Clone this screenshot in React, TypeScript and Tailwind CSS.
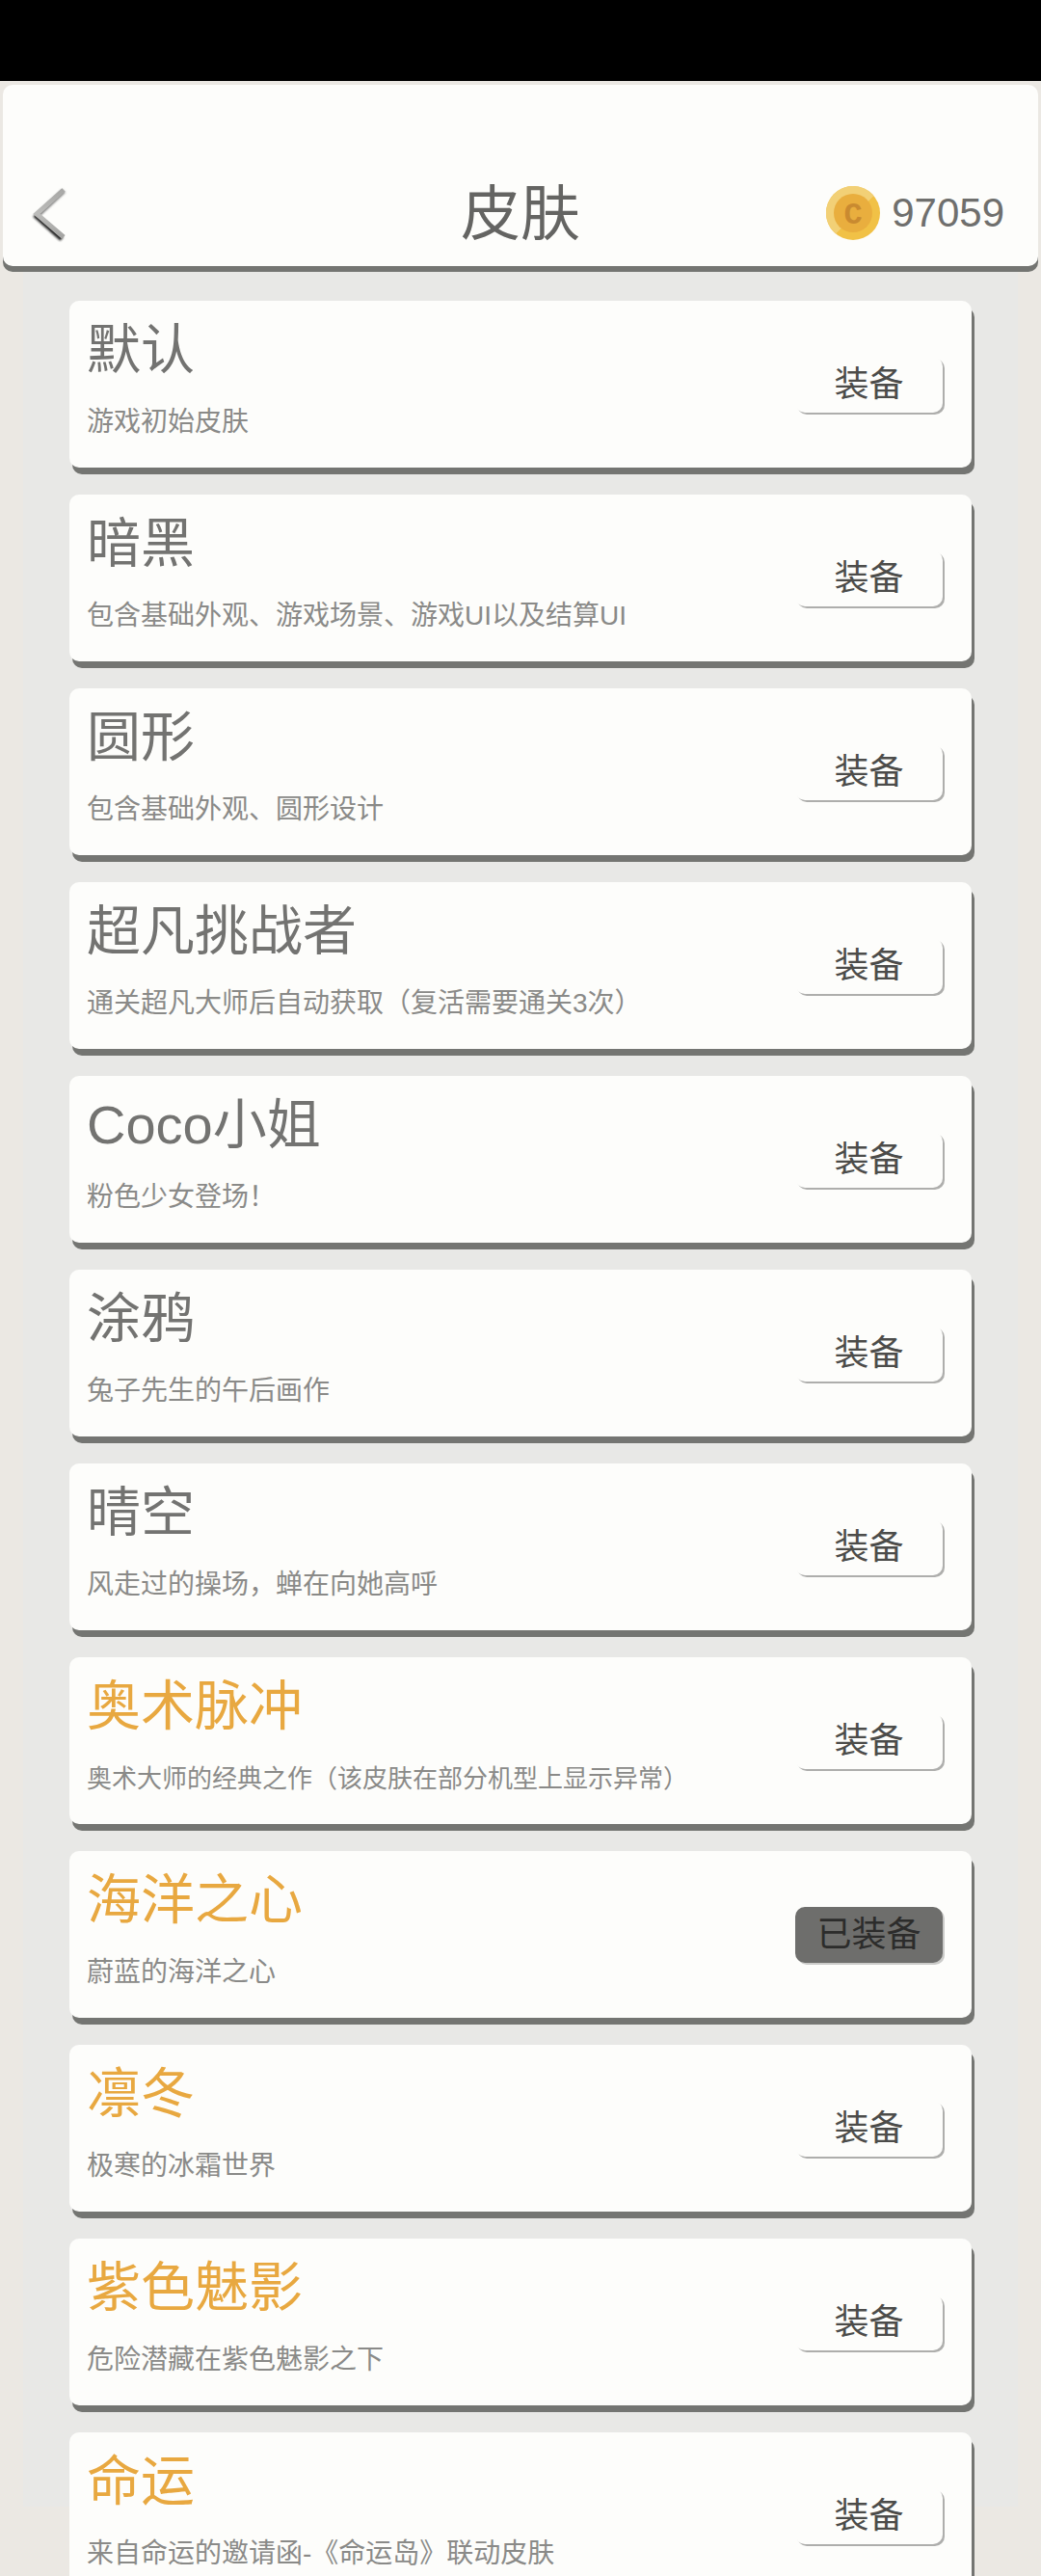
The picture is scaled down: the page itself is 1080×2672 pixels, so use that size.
import { useState } from 'react';

interface Skin {
  id: string;
  name: string;
  desc: string;
  rare?: boolean;
}

const SKINS: Skin[] = [
  { id: 'default', name: '默认', desc: '游戏初始皮肤' },
  { id: 'dark', name: '暗黑', desc: '包含基础外观、游戏场景、游戏UI以及结算UI' },
  { id: 'round', name: '圆形', desc: '包含基础外观、圆形设计' },
  { id: 'challenger', name: '超凡挑战者', desc: '通关超凡大师后自动获取（复活需要通关3次）' },
  { id: 'coco', name: 'Coco小姐', desc: '粉色少女登场！' },
  { id: 'doodle', name: '涂鸦', desc: '兔子先生的午后画作' },
  { id: 'clear-sky', name: '晴空', desc: '风走过的操场，蝉在向她高呼' },
  { id: 'arcane', name: '奥术脉冲', desc: '奥术大师的经典之作（该皮肤在部分机型上显示异常）', rare: true },
  { id: 'ocean', name: '海洋之心', desc: '蔚蓝的海洋之心', rare: true },
  { id: 'winter', name: '凛冬', desc: '极寒的冰霜世界', rare: true },
  { id: 'purple', name: '紫色魅影', desc: '危险潜藏在紫色魅影之下', rare: true },
  { id: 'destiny', name: '命运', desc: '来自命运的邀请函-《命运岛》联动皮肤', rare: true },
];

// Descriptions longer than this drop one text size so they clear the button
const LONG_DESC = 22;

// ── Icons ─────────────────────────────────────────────────────────────────────
const BackIcon = () => (
  <svg viewBox="0 0 40 60" className="h-[60px] w-10" fill="none" aria-hidden="true">
    <defs>
      <filter id="soft" x="-20%" y="-20%" width="140%" height="140%">
        <feGaussianBlur stdDeviation="1" />
      </filter>
      <linearGradient id="metal" x1="0" y1="0" x2="0" y2="1">
        <stop offset="0" stopColor="#a8a8a6" />
        <stop offset="0.5" stopColor="#bcbcba" />
        <stop offset="1" stopColor="#a4a4a2" />
      </linearGradient>
    </defs>
    <path d="M36 4L9 29" stroke="#777" strokeWidth="5" filter="url(#soft)" />
    <path d="M6 29L34 54" stroke="#222" strokeWidth="5" filter="url(#soft)" />
    <path d="M36 3L8 28L36 52" stroke="url(#metal)" strokeWidth="5" />
  </svg>
);

const CoinIcon = () => (
  <svg viewBox="0 0 56 56" className="size-14" aria-hidden="true">
    <circle cx="28" cy="28" r="28" fill="#f1c146" />
    <path d="M10 49.500A28 28 0 0 1 28 0A28 28 0 0 1 49.500 10Z" fill="#f2d076" />
    <circle cx="28" cy="28" r="20" fill="#e9ae3e" />
    <text
      x="28"
      y="39"
      textAnchor="middle"
      className="fill-[#c98a30] font-['Liberation_Mono',monospace] text-[32px] font-bold"
    >
      C
    </text>
  </svg>
);

// ── Skin card ─────────────────────────────────────────────────────────────────
interface SkinCardProps {
  skin: Skin;
  equipped: boolean;
  onEquip: () => void;
}

const SkinCard = ({ skin, equipped, onEquip }: SkinCardProps) => (
  <li className="flex h-[173px] shrink-0 items-center justify-between rounded-[10px] bg-[#fdfdfb] pl-[18px] pr-[30px] shadow-[3px_7px_0_#747572]">
    <div className="flex flex-col gap-5 self-start pt-4">
      <h2 className={`text-[56px] leading-[70px] ${skin.rare ? 'text-[#e8a840]' : 'text-[#737371]'}`}>{skin.name}</h2>
      <p className={`leading-[40px] text-[#8a8a88] ${skin.desc.length > LONG_DESC ? 'text-[26px]' : 'text-[28px]'}`}>
        {skin.desc}
      </p>
    </div>
    <button
      type="button"
      disabled={equipped}
      onClick={onEquip}
      className={`h-[58px] w-[153px] shrink-0 rounded-[10px] text-[36px] leading-[58px] ${
        equipped
          ? 'bg-[#6e6e6c] text-[#2c2c2b] shadow-[2px_2px_0_#cbcbc9]'
          : 'bg-[#fdfdfb] text-[#4c4c4a] shadow-[2px_2px_0_#aeaeac]'
      }`}
    >
      {equipped ? '已装备' : '装备'}
    </button>
  </li>
);

export default function App() {
  const [equippedId, setEquippedId] = useState('ocean');

  return (
    <div className="flex h-screen flex-col overflow-hidden bg-[#ebe8e3] font-['Liberation_Sans','Noto_Sans_CJK_SC',sans-serif]">
      {/* Status bar */}
      <div className="h-[84px] shrink-0 bg-black" />

      {/* Header */}
      <header className="mx-[3px] mt-1 grid h-[188px] shrink-0 grid-cols-3 items-end rounded-[10px] bg-[#fdfdfb] px-[27px] pb-[22px] shadow-[0_6px_0_#747572]">
        <button type="button" aria-label="返回" className="justify-self-start">
          <BackIcon />
        </button>
        <h1 className="text-center text-[62px] leading-[62px] text-[#646462]">皮肤</h1>
        <div className="flex h-[66px] items-center justify-end gap-3 pr-2">
          <CoinIcon />
          <span className="text-[42px] leading-[56px] text-[#6f6f6d]">97059</span>
        </div>
      </header>

      {/* Skin list */}
      <main className="mx-6 mb-[72px] mt-[6px] min-h-0 flex-1 bg-[#e8e8e6]">
        <ul className="flex flex-col gap-7 px-12 pt-[30px]">
          {SKINS.map(skin => (
            <SkinCard
              key={skin.id}
              skin={skin}
              equipped={skin.id === equippedId}
              onEquip={() => setEquippedId(skin.id)}
            />
          ))}
        </ul>
      </main>
    </div>
  );
}
